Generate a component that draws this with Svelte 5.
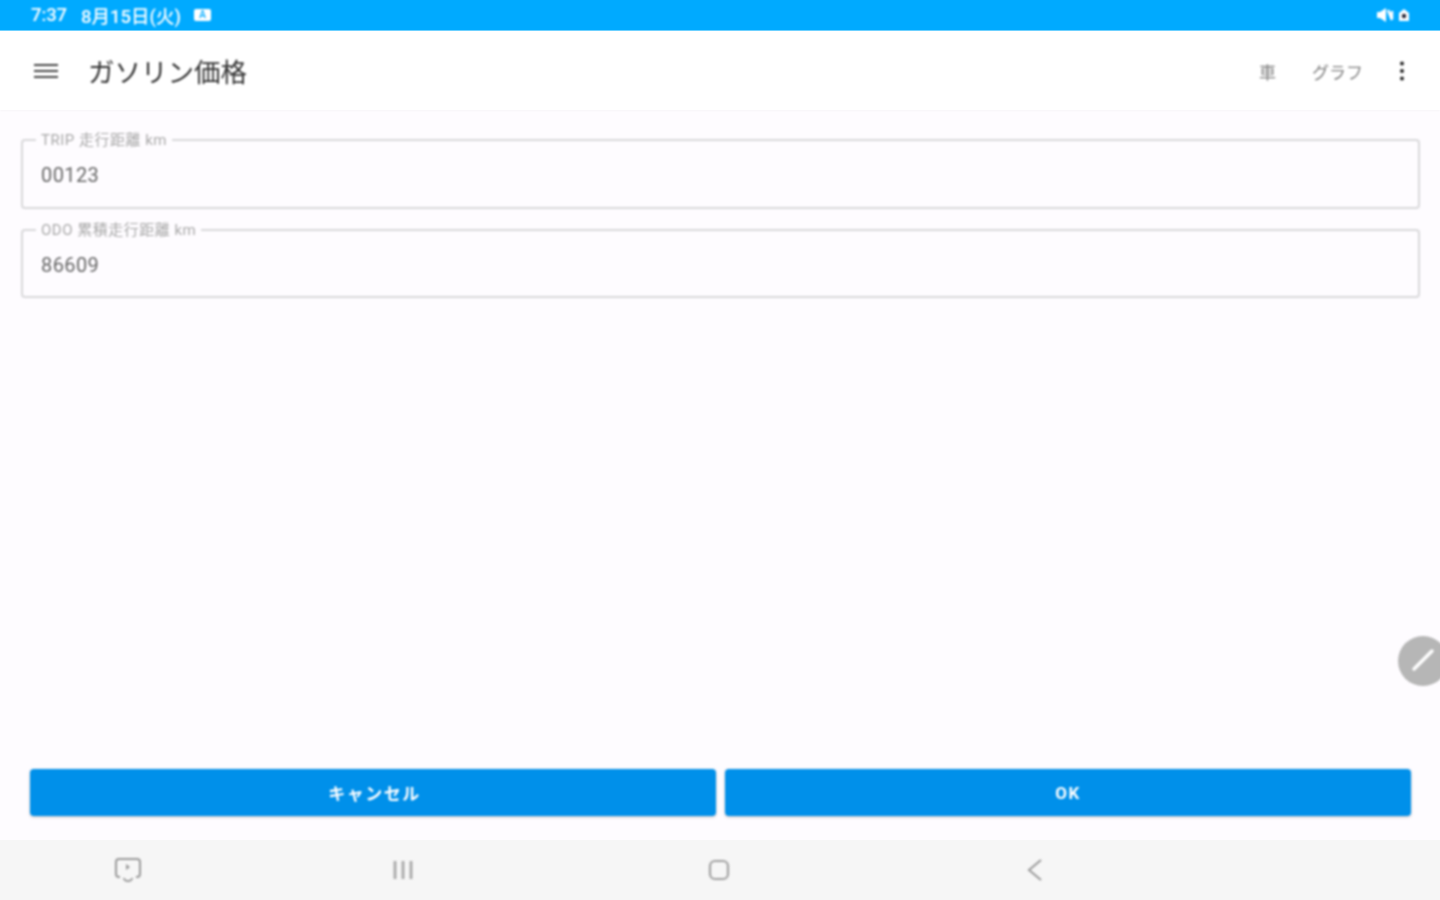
<script>
  const fields = [
    { label: 'TRIP 走行距離 km', value: '00123' },
    { label: 'ODO 累積走行距離 km', value: '86609' }
  ];
</script>

<div class="page">
  <header class="status">
    <div class="status-left soft">
      <span class="time">7:37</span>
      <span class="date">8月15日(火)</span>
      <span class="badge">A</span>
    </div>
    <div class="status-right soft">
      <svg width="18" height="14" viewBox="0 0 18 14"><path d="M1 4h3l6-4v14l-6-4H1z" fill="#fff"/><path d="M12 2l4 10M16 3v8" stroke="#fff" stroke-width="2.500" fill="none"/></svg>
      <svg width="14" height="14" viewBox="0 0 14 14"><path d="M2 5l5-4 5 4v8H2z" fill="#fff"/><circle cx="7" cy="8" r="2.2" fill="#223"/></svg>
    </div>
  </header>

  <div class="appbar">
    <button class="menu soft" aria-label="menu">
      <svg width="24" height="16" viewBox="0 0 24 16"><path d="M0 2h24M0 8h24M0 14h24" stroke="#444" stroke-width="2"/></svg>
    </button>
    <h1 class="soft">ガソリン価格</h1>
    <div class="actions soft">
      <span class="action car">車</span>
      <span class="action graph">グラフ</span>
      <svg class="more" width="4" height="20" viewBox="0 0 4 20"><circle cx="2" cy="2.5" r="2"/><circle cx="2" cy="10" r="2"/><circle cx="2" cy="17.500" r="2"/></svg>
    </div>
  </div>

  <main>
    <div class="fields">
      {#each fields as f}
        <div class="field soft">
          <span class="label">{f.label}</span>
          <span class="value">{f.value}</span>
        </div>
      {/each}
    </div>
    <div class="buttons">
      <button class="btn soft cancel">キャンセル</button>
      <button class="btn soft">OK</button>
    </div>
  </main>

  <nav>
    <svg class="soft" width="28" height="26" viewBox="0 0 28 26" fill="none" stroke="#9a9a9a" stroke-width="2"><path d="M6 20H5a3 3 0 0 1-3-3V5a3 3 0 0 1 3-3h18a3 3 0 0 1 3 3v12a3 3 0 0 1-3 3h-1"/><path d="M12 7l4 3-4 3z" fill="#9a9a9a" stroke="none"/><path d="M10 21a4 3 0 0 0 8 0" /></svg>
    <svg class="soft" width="22" height="20" viewBox="0 0 22 20"><path d="M3 1v18M11 1v18M19 1v18" stroke="#a8a8a8" stroke-width="2.800"/></svg>
    <svg class="soft" width="22" height="22" viewBox="0 0 22 22"><rect x="2" y="2" width="18" height="18" rx="5" fill="none" stroke="#a0a0a0" stroke-width="2.200"/></svg>
    <svg class="soft" width="16" height="24" viewBox="0 0 16 24"><path d="M14 2L2 12l12 10" fill="none" stroke="#9a9a9a" stroke-width="2"/></svg>
  </nav>

  <div class="fab soft">
    <svg width="50" height="50" viewBox="0 0 50 50"><path d="M16 33L34 15" stroke="#fff" stroke-width="3.500" stroke-linecap="round"/></svg>
  </div>
</div>

<style>
  :global(body) { margin: 0; background: #fefcff; }
  .page {
    position: relative;
    width: 1440px;
    height: 900px;
    overflow: hidden;
    display: flex;
    flex-direction: column;
    background: #fefcff;
    font-family: Roboto, "Noto Sans CJK JP", sans-serif;
  }
  .soft { filter: blur(0.8px); }
  .status {
    height: 31px;
    background: #00aaff;
    color: #fff;
    display: flex;
    justify-content: space-between;
    align-items: center;
    padding: 0 29px 0 31px;
    box-sizing: border-box;
    flex: none;
    font-size: 18.5px;
    font-weight: 500;
    border-bottom: 1px solid #6cd0ff;
  }
  .status-left { display: flex; align-items: center; }
  .time { width: 50px; letter-spacing: -0.1px; }
  .date { width: 113px; }
  .badge {
    width: 17px;
    height: 12px;
    background: #fff;
    color: #00aaff;
    border-radius: 2px;
    font-size: 10px;
    line-height: 12px;
    text-align: center;
  }
  .status-right { display: flex; align-items: center; gap: 3px; }
  .appbar {
    height: 79px;
    flex: none;
    background: #fff;
    display: flex;
    align-items: center;
    padding: 1px 36px 0 34px;
    box-sizing: border-box;
    box-shadow: 0 1px 2px rgba(0, 0, 0, 0.03);
    z-index: 1;
  }
  .menu {
    border: 0;
    background: none;
    padding: 0;
    width: 24px;
    height: 16px;
    display: flex;
    margin-right: 30px;
  }
  h1 {
    margin: 4px 0 0;
    font-size: 26.5px;
    font-weight: 400;
    color: #333;
    line-height: 1;
  }
  .actions {
    margin-left: auto;
    display: flex;
    align-items: center;
    color: #808080;
    font-size: 17px;
  }
  .car { margin-right: 36px; }
  .graph { margin-right: 37px; }
  .more { fill: #222; }
  main {
    flex: 1;
    display: flex;
    flex-direction: column;
    justify-content: space-between;
    padding: 29px 20px 24px 21px;
  }
  .fields { display: flex; flex-direction: column; gap: 20px; }
  .field {
    position: relative;
    height: 69.5px;
    box-sizing: border-box;
    border: 2px solid #d8d8da;
    border-radius: 4px;
    display: flex;
    align-items: center;
    padding: 3px 0 0 18px;
  }
  .label {
    position: absolute;
    left: 13px;
    top: -10px;
    padding: 0 5px;
    background: #fefcff;
    font-size: 15px;
    line-height: 18px;
    letter-spacing: 0.5px;
    color: #a8a8a8;
  }
  .value {
    font-size: 20px;
    color: #666;
    letter-spacing: 0.4px;
  }
  .buttons {
    display: flex;
    gap: 9px;
    padding: 0 9px;
  }
  .btn {
    flex: 1;
    height: 47px;
    border: 0;
    border-radius: 4px;
    background: #0090ea;
    color: #fff;
    font-family: inherit;
    font-size: 17px;
    font-weight: 700;
    letter-spacing: 1.500px;
    box-shadow: 0 1px 3px rgba(0, 0, 0, 0.25);
  }
  .cancel { text-indent: 3px; }
  nav {
    height: 60px;
    flex: none;
    background: #f6f6f6;
    display: grid;
    grid-template-columns: 255px 296px 336px 296px;
    align-items: center;
    justify-items: center;
  }
  .fab {
    position: absolute;
    left: 1398px;
    top: 636px;
    width: 50px;
    height: 50px;
    border-radius: 50%;
    background: #b6b6b6;
  }
</style>
